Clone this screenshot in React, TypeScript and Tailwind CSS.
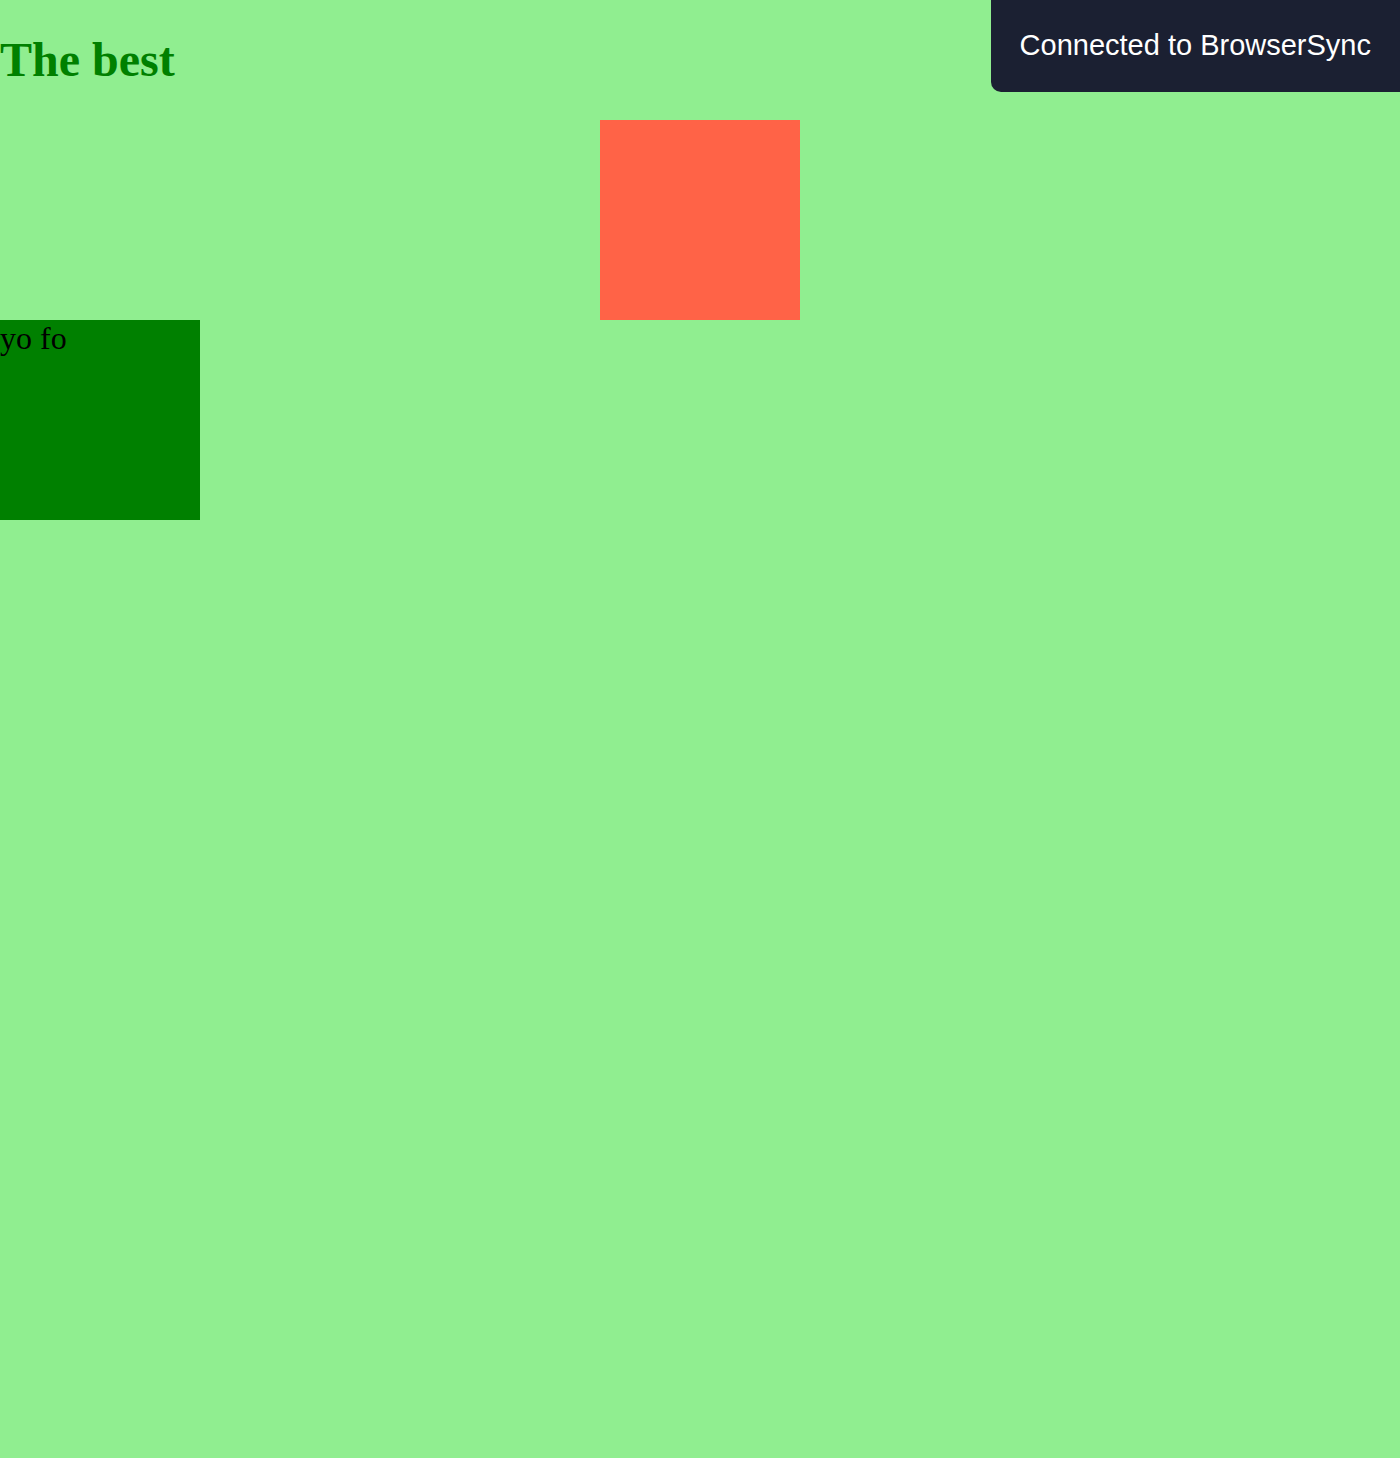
export default function App() {
  return (
    <div className="relative min-h-screen w-full bg-[#90ee90] pt-8 font-['Liberation_Serif',serif]">
      <h1 className="mb-8 text-[48px] leading-[56px] font-bold text-[#008000]">The best</h1>
      <div className="mx-auto h-[200px] w-[200px] bg-[#ff6347]" />
      <div className="h-[200px] w-[200px] bg-[#008000] text-[32px] leading-[37px] text-black">yo fo</div>

      <div className="absolute right-0 top-0 flex h-[92px] items-center rounded-bl-[10px] bg-[#1b2032] px-[29px] font-['Liberation_Sans',Arial,sans-serif] text-[29px] text-white">
        Connected to BrowserSync
      </div>
    </div>
  );
}
